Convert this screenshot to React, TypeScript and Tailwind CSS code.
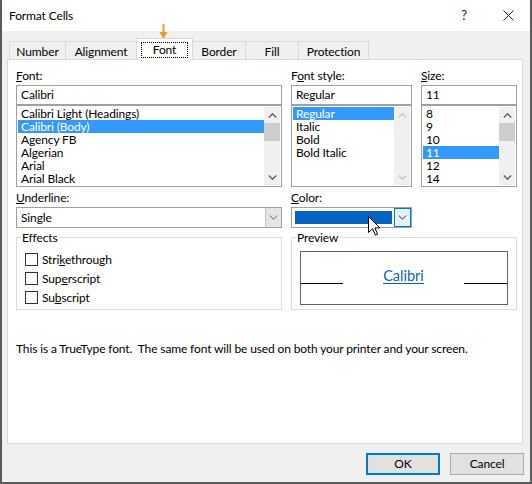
import React from "react";

function Chev({ up, color = "#606060", sw = 1.4 }: { up?: boolean; color?: string; sw?: number }) {
  return (
    <svg width="9" height="5" viewBox="0 0 9 5">
      <polyline
        points={up ? "0.8,4.5 4.5,0.8 8.2,4.5" : "0.8,0.5 4.5,4.2 8.2,0.5"}
        fill="none"
        stroke={color}
        strokeWidth={sw}
      />
    </svg>
  );
}

function ScrollBar({ disabled }: { disabled?: boolean }) {
  const c = disabled ? "#c9c9c9" : "#606060";
  return (
    <div className="w-[16px] shrink-0 bg-[#f0f0f0] flex flex-col">
      <div className="h-[16px] flex items-center justify-center">
        <Chev up color={c} />
      </div>
      {!disabled && <div className="h-[18px] bg-[#cdcdcd]" />}
      <div className="flex-1" />
      <div className="h-[16px] flex items-center justify-center">
        <Chev color={c} />
      </div>
    </div>
  );
}

function ListBox({ items, selected, disabled }: { items: string[]; selected: number; disabled?: boolean }) {
  return (
    <div className="h-[82px] border border-[#a0a0a0] bg-white p-[1px] flex">
      <div className="flex-1 flex flex-col overflow-hidden">
        {items.map((t, i) => (
          <div
            key={t}
            className={`h-[13px] leading-[13px] pl-[3px] whitespace-nowrap ${
              i === selected ? "bg-[#3399ff] text-white" : ""
            }`}
          >
            {t}
          </div>
        ))}
      </div>
      <ScrollBar disabled={disabled} />
    </div>
  );
}

function Input({ value }: { value: string }) {
  return (
    <div className="h-[20px] border border-[#a0a0a0] bg-white pl-[4px] flex items-center leading-none">
      {value}
    </div>
  );
}

function Label({ children }: { children: React.ReactNode }) {
  return <div className="h-[15px] leading-[15px] mb-[2px] whitespace-nowrap">{children}</div>;
}

function Check({ pre, u, post }: { pre: string; u: string; post: string }) {
  return (
    <div className="h-[19px] flex items-center">
      <div className="w-[13px] h-[13px] border border-[#333333] bg-white" />
      <span className="ml-[4px] leading-none">
        {pre}
        <span className="underline">{u}</span>
        {post}
      </span>
    </div>
  );
}

export default function App() {
  const tabs = [
    { t: "Number", w: "w-[57px]" },
    { t: "Alignment", w: "w-[72px]" },
    { t: "Font", w: "w-[57px]", active: true },
    { t: "Border", w: "w-[54px]" },
    { t: "Fill", w: "w-[54px]" },
    { t: "Protection", w: "w-[71px]" },
  ];
  return (
    <div className="font-['Lato',sans-serif] text-[12px] tracking-[-0.13px] text-black relative w-[532px] h-[484px] bg-[#f0f0f0] border-x-2 border-b-2 border-[#5a5a5a] flex flex-col overflow-hidden">
      {/* Title bar */}
      <div className="h-[31px] bg-white flex items-center pl-[7px] pr-[16px] shrink-0">
        <span className="text-[12px]">Format Cells</span>
        <span className="ml-auto mr-[36px] text-[13px] text-[#222]">?</span>
        <svg width="11" height="11" viewBox="0 0 11 11">
          <path d="M0.5 0.5 L10.5 10.5 M10.5 0.5 L0.5 10.5" stroke="#222" strokeWidth="1" />
        </svg>
      </div>

      {/* Tabs */}
      <div className="pl-[5px] pt-[7px]">
        <div className="flex items-end h-[21px] pl-[2px] relative z-10">
          {tabs.map((tab, i) =>
            tab.active ? (
              <div
                key={tab.t}
                className={`${tab.w} h-[22px] -mb-px ${i > 0 ? "-ml-px" : ""} bg-white border-t border-x border-[#d9d9d9] flex items-start justify-center pt-[3px] relative z-10`}
              >
                <div className="w-[47px] h-[16px] border border-dotted border-black flex items-center justify-center leading-none">
                  {tab.t}
                </div>
              </div>
            ) : (
              <div
                key={tab.t}
                className={`${tab.w} h-[18px] ${i > 0 ? "-ml-px" : ""} border-t border-x border-[#d9d9d9] flex items-center justify-center leading-none pt-[2px]`}
              >
                {tab.t}
              </div>
            )
          )}
        </div>

        {/* Panel */}
        <div className="w-[516px] h-[385px] bg-white border border-[#d9d9d9] pl-[8px] pt-[8px]">
          {/* Row A */}
          <div className="flex gap-[9px]">
            <div className="w-[266px] flex flex-col">
              <Label>
                <span className="underline">F</span>ont:
              </Label>
              <Input value="Calibri" />
              <ListBox
                items={["Calibri Light (Headings)", "Calibri (Body)", "Agency FB", "Algerian", "Arial", "Arial Black"]}
                selected={1}
              />
            </div>
            <div className="w-[121px] flex flex-col">
              <Label>
                F<span className="underline">o</span>nt style:
              </Label>
              <Input value="Regular" />
              <ListBox items={["Regular", "Italic", "Bold", "Bold Italic"]} selected={0} disabled />
            </div>
            <div className="w-[96px] flex flex-col">
              <Label>
                <span className="underline">S</span>ize:
              </Label>
              <Input value="11" />
              <ListBox items={["8", "9", "10", "11", "12", "14"]} selected={3} />
            </div>
          </div>

          {/* Row B */}
          <div className="flex gap-[9px] mt-[3px]">
            <div className="w-[266px]">
              <Label>
                <span className="underline">U</span>nderline:
              </Label>
              <div className="h-[21px] border border-[#a0a0a0] bg-white flex">
                <div className="flex-1 pl-[4px] flex items-center leading-none">Single</div>
                <div className="w-[16px] bg-[#e5e5e5] border-l border-[#c4c4c4] flex items-center justify-center">
                  <Chev color="#606060" sw={1} />
                </div>
              </div>
            </div>
            <div className="w-[121px]">
              <Label>
                <span className="underline">C</span>olor:
              </Label>
              <div className="h-[21px] border border-[#a0a0a0] bg-white flex">
                <div className="w-[97px] h-[13px] bg-[#0563c1] ml-[3px] mt-[3px]" />
                <div className="ml-[2px] flex-1 bg-[#e5f1fb] border border-[#0078d7] flex items-center justify-center">
                  <Chev color="#333333" sw={1} />
                </div>
              </div>
            </div>
          </div>

          {/* Row C */}
          <div className="flex gap-[9px] mt-[2px]">
            <fieldset className="w-[266px] h-[80px] border border-[#dcdcdc] p-0 m-0">
              <legend className="ml-[4px] px-[1px] h-[15px] leading-[15px]">Effects</legend>
              <div className="pl-[8px] pt-[5px]">
                <Check pre="Stri" u="k" post="ethrough" />
                <Check pre="Sup" u="e" post="rscript" />
                <Check pre="Su" u="b" post="script" />
              </div>
            </fieldset>
            <fieldset className="w-[226px] h-[80px] border border-[#dcdcdc] p-0 m-0">
              <legend className="ml-[4px] px-[1px] h-[15px] leading-[15px]">Preview</legend>
              <div className="mx-[8px] mt-[6px] h-[54px] border border-[#646464] flex items-end pb-[20px]">
                <div className="w-[42px] h-px bg-black" />
                <div className="flex-1 flex justify-center">
                  <span className="font-['Lato',sans-serif] text-[14.5px] tracking-normal leading-[15px] text-[#0563c1] border-b border-[#0563c1]">
                    Calibri
                  </span>
                </div>
                <div className="w-[43px] h-px bg-black" />
              </div>
            </fieldset>
          </div>

          {/* Row D */}
          <div className="mt-[31px] h-[15px] leading-[15px] whitespace-pre">
            {"This is a TrueType font.  The same font will be used on both your printer and your screen."}
          </div>
        </div>

        {/* Buttons */}
        <div className="flex justify-end gap-[10px] mt-[9px] mr-[6px]">
          <button className="w-[74px] h-[22px] bg-[#e1e1e1] border-2 border-[#0078d7] leading-none">OK</button>
          <button className="w-[74px] h-[22px] bg-[#e1e1e1] border border-[#adadad] leading-none">Cancel</button>
        </div>
      </div>

      {/* Orange annotation arrow */}
      <svg className="absolute left-[157px] top-[24px]" width="9" height="16" viewBox="0 0 9 16">
        <rect x="3.5" y="0" width="2" height="9" fill="#f29b1e" />
        <polygon points="0.5,8 8.5,8 4.5,15" fill="#f29b1e" />
      </svg>

      {/* Mouse cursor */}
      <svg className="absolute left-[366px] top-[216px]" width="13" height="21" viewBox="0 0 13 21">
        <path
          d="M0.5 0.5 L0.5 16.5 L4.5 12.7 L7.3 19.2 L9.6 18.2 L6.9 11.9 L12 11.9 Z"
          fill="white"
          stroke="black"
          strokeWidth="1"
          strokeLinejoin="round"
        />
      </svg>
    </div>
  );
}
